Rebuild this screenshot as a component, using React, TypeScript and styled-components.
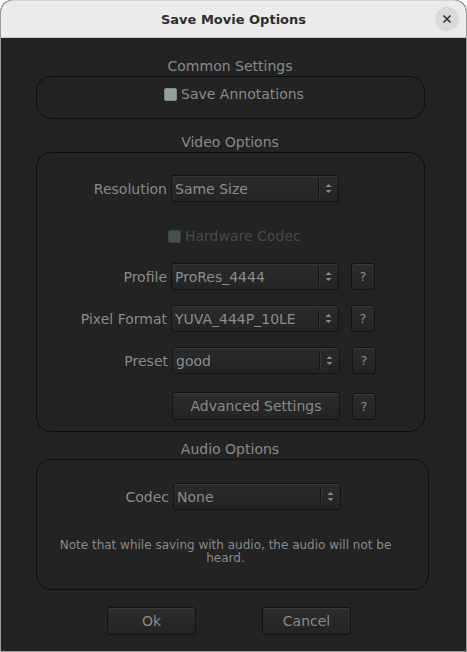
import React from "react";
import styled, { createGlobalStyle } from "styled-components";

const Global = createGlobalStyle`
  html, body { margin: 0; padding: 0; background: #ffffff; }
  body { font-family: "DejaVu Sans", "Liberation Sans", sans-serif; }
  * { box-sizing: border-box; }
`;

const Window = styled.div`
  width: 467px;
  height: 652px;
  display: flex;
  flex-direction: column;
  border: 1px solid #9c9c9c;
  border-top: none;
  border-radius: 12px 12px 0 0;
  overflow: hidden;
  background: #232323;
`;

const TitleBar = styled.div`
  height: 38px;
  flex: none;
  background: #ebebeb;
  border-bottom: 1px solid #c8c8c8;
  display: flex;
  align-items: center;
  justify-content: center;
  position: relative;
  border-top: 1px solid #d4d4d4;
  border-radius: 12px 12px 0 0;
`;

const Title = styled.div`
  font-weight: bold;
  font-size: 13px;
  color: #2e2e2e;
`;

const CloseButton = styled.div`
  position: absolute;
  right: 7px;
  top: 6px;
  width: 24px;
  height: 24px;
  border-radius: 50%;
  background: #dadada;
  display: flex;
  align-items: center;
  justify-content: center;
`;

const Body = styled.div`
  flex: 1;
  display: flex;
  flex-direction: column;
  padding: 18px 0 0 35px;
  color: #8a8a8a;
  font-size: 14px;
`;

const SectionTitle = styled.div<{ $mt: number }>`
  width: 388px;
  text-align: center;
  height: 20px;
  line-height: 20px;
  margin-top: ${(p) => p.$mt}px;
  color: #8a8a8a;
`;

const GroupBox = styled.div<{ $w: number; $h: number; $pt: number }>`
  width: ${(p) => p.$w}px;
  height: ${(p) => p.$h}px;
  border: 1px solid #0e0e0e;
  border-radius: 15px;
  display: flex;
  flex-direction: column;
  padding-top: ${(p) => p.$pt}px;
`;

const CheckRow = styled.label<{ $disabled?: boolean; $ml: number; $mt?: number; $mb?: number }>`
  display: flex;
  align-items: center;
  margin-left: ${(p) => p.$ml}px;
  margin-top: ${(p) => p.$mt ?? 0}px;
  margin-bottom: ${(p) => p.$mb ?? 0}px;
  color: ${(p) => (p.$disabled ? "#4a4a4a" : "#8a8a8a")};
  gap: 4px;
  height: 20px;
`;

const CheckBox = styled.span<{ $disabled?: boolean }>`
  width: 13px;
  height: 13px;
  border-radius: 2px;
  background: ${(p) => (p.$disabled ? "#465050" : "#91a1a1")};
  border: 1px solid ${(p) => (p.$disabled ? "#3c4444" : "#7b8a8a")};
`;

const Row = styled.div<{ $label: number; $mb: number }>`
  display: grid;
  grid-template-columns: ${(p) => p.$label}px 168px 24px;
  column-gap: 0;
  align-items: center;
  margin-bottom: ${(p) => p.$mb}px;
`;

const Label = styled.div`
  text-align: right;
  padding-right: 4px;
  white-space: nowrap;
  color: #8a8a8a;
`;

const Combo = styled.div`
  height: 27px;
  border: 1px solid #131313;
  border-radius: 3px;
  background: linear-gradient(#2b2b2b, #242424);
  box-shadow: inset 0 1px 0 #363636;
  display: flex;
  align-items: center;
  padding-left: 3px;
  color: #8c8c8c;
`;

const ComboText = styled.span`
  flex: 1;
`;

const ComboArrows = styled.div`
  width: 20px;
  height: 19px;
  border-left: 1px solid #141414;
  box-shadow: inset 1px 0 0 #333;
  display: flex;
  align-items: center;
  justify-content: center;
`;

const HelpButton = styled.div`
  margin-left: 12px;
  width: 24px;
  height: 27px;
  border: 1px solid #131313;
  border-radius: 3px;
  background: linear-gradient(#2c2c2c, #242424);
  box-shadow: inset 0 1px 0 #3a3a3a;
  display: flex;
  align-items: center;
  justify-content: center;
  font-size: 13px;
  color: #8a8a8a;
`;

const PushButton = styled.div<{ $w: number }>`
  width: ${(p) => p.$w}px;
  height: 28px;
  border: 1px solid #131313;
  border-radius: 3px;
  background: linear-gradient(#2c2c2c, #242424);
  box-shadow: inset 0 1px 0 #3a3a3a;
  display: flex;
  align-items: center;
  justify-content: center;
  color: #8a8a8a;
`;

const Note = styled.div`
  margin-top: 29px;
  text-align: center;
  font-size: 12px;
  line-height: 13px;
  color: #8a8a8a;
  padding: 0 34px 0 20px;
`;

const ButtonBar = styled.div`
  display: flex;
  gap: 66px;
  margin-top: 17px;
  margin-left: 71px;
`;

const Arrows = () => (
  <svg width="7" height="11" viewBox="0 0 7 11">
    <path d="M3.5 1 L6.5 4 L0.5 4 Z" fill="#8a8a8a" />
    <path d="M3.5 10 L6.5 7 L0.5 7 Z" fill="#8a8a8a" />
  </svg>
);

const Select = ({ value }: { value: string }) => (
  <Combo>
    <ComboText>{value}</ComboText>
    <ComboArrows>
      <Arrows />
    </ComboArrows>
  </Combo>
);

export default function App() {
  return (
    <>
      <Global />
      <Window>
        <TitleBar>
          <Title>Save Movie Options</Title>
          <CloseButton>
            <svg width="10" height="10" viewBox="0 0 10 10">
              <path d="M1.5 1.5 L8.5 8.5 M8.5 1.5 L1.5 8.5" stroke="#2e2e2e" strokeWidth="1.6" />
            </svg>
          </CloseButton>
        </TitleBar>
        <Body>
          <SectionTitle $mt={0}>Common Settings</SectionTitle>
          <GroupBox $w={389} $h={43} $pt={7}>
            <CheckRow $ml={127}>
              <CheckBox />
              Save Annotations
            </CheckRow>
          </GroupBox>

          <SectionTitle $mt={13}>Video Options</SectionTitle>
          <GroupBox $w={389} $h={280} $pt={22}>
            <Row $label={134} $mb={24}>
              <Label>Resolution</Label>
              <Select value="Same Size" />
            </Row>
            <CheckRow $disabled $ml={131} $mb={17}>
              <CheckBox $disabled />
              Hardware Codec
            </CheckRow>
            <Row $label={134} $mb={15}>
              <Label>Profile</Label>
              <Select value="ProRes_4444" />
              <HelpButton>?</HelpButton>
            </Row>
            <Row $label={134} $mb={15}>
              <Label>Pixel Format</Label>
              <Select value="YUVA_444P_10LE" />
              <HelpButton>?</HelpButton>
            </Row>
            <Row $label={135} $mb={18}>
              <Label>Preset</Label>
              <Select value="good" />
              <HelpButton>?</HelpButton>
            </Row>
            <Row $label={135} $mb={0}>
              <span />
              <PushButton $w={168}>Advanced Settings</PushButton>
              <HelpButton>?</HelpButton>
            </Row>
          </GroupBox>

          <SectionTitle $mt={7}>Audio Options</SectionTitle>
          <GroupBox $w={393} $h={131} $pt={23}>
            <Row $label={136} $mb={0}>
              <Label>Codec</Label>
              <Select value="None" />
            </Row>
            <Note>
              Note that while saving with audio, the audio will not be heard.
            </Note>
          </GroupBox>

          <ButtonBar>
            <PushButton $w={89}>Ok</PushButton>
            <PushButton $w={89}>Cancel</PushButton>
          </ButtonBar>
        </Body>
      </Window>
    </>
  );
}
